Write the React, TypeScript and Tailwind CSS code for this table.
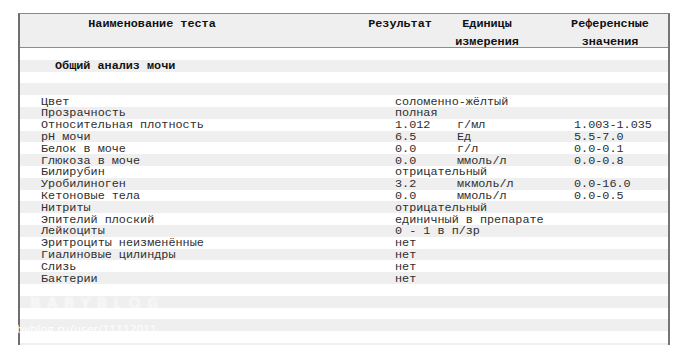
const rows: [string, string, string, string][] = [
  ["Цвет", "соломенно-жёлтый", "", ""],
  ["Прозрачность", "полная", "", ""],
  ["Относительная плотность", "1.012", "г/мл", "1.003-1.035"],
  ["pH мочи", "6.5", "Ед", "5.5-7.0"],
  ["Белок в моче", "0.0", "г/л", "0.0-0.1"],
  ["Глюкоза в моче", "0.0", "ммоль/л", "0.0-0.8"],
  ["Билирубин", "отрицательный", "", ""],
  ["Уробилиноген", "3.2", "мкмоль/л", "0.0-16.0"],
  ["Кетоновые тела", "0.0", "ммоль/л", "0.0-0.5"],
  ["Нитриты", "отрицательный", "", ""],
  ["Эпителий плоский", "единичный в препарате", "", ""],
  ["Лейкоциты", "0 - 1 в п/зр", "", ""],
  ["Эритроциты неизменённые", "нет", "", ""],
  ["Гиалиновые цилиндры", "нет", "", ""],
  ["Слизь", "нет", "", ""],
  ["Бактерии", "нет", "", ""],
];

const Stripe = ({ index, children }: { index: number; children?: React.ReactNode }) => {
  return (
    <div
      className={
        index % 2 === 1
          ? "h-[11.8px] leading-[11.8px] pt-[1.5px] bg-[#efefef]"
          : "h-[11.8px] leading-[11.8px] pt-[1.5px] bg-white"
      }
    >
      {children}
    </div>
  );
};

const Header = () => {
  return (
    <div className="h-[34px] bg-[#efefef] border-b border-[#8c8c8c] flex font-bold text-[#111] leading-[18px] whitespace-nowrap pt-[1px]">
      <div className="w-[264px] text-center">Наименование теста</div>
      <div className="ml-[69px] w-[94px] text-center">Результат</div>
      <div className="w-[80px] text-center">
        Единицы
        <br />
        измерения
      </div>
      <div className="ml-[33px] w-[100px] text-center">
        Референсные
        <br />
        значения
      </div>
    </div>
  );
};

export default function App() {
  const trailing = Array.from({ length: 7 });
  return (
    <div className="relative w-[677px] h-[345px] overflow-hidden bg-white pl-[18px] pt-[13px] font-['Liberation_Mono',monospace] text-[11.8px]">
      <div className="w-[652px] h-[340px] border-t border-t-[#8a8a8a] border-l-2 border-l-[#6e6e6e] border-r-2 border-r-[#757575] overflow-hidden">
        <Header />
        <Stripe index={0} />
        <Stripe index={1}>
          <span className="pl-[35px] font-bold text-[#111]">Общий анализ мочи</span>
        </Stripe>
        <Stripe index={2} />
        <Stripe index={3} />
        {rows.map((r, i) => (
          <Stripe key={r[0]} index={i + 4}>
            <div className="grid grid-cols-[354px_62px_117px_1fr] pl-[21px] text-[#2e2e2e] whitespace-nowrap">
              <span>{r[0]}</span>
              <span>{r[1]}</span>
              <span>{r[2]}</span>
              <span>{r[3]}</span>
            </div>
          </Stripe>
        ))}
        {trailing.map((_, i) => (
          <Stripe key={i} index={i + 20} />
        ))}
      </div>
      <div className="absolute left-[30px] top-[291px] font-['Open_Sans',sans-serif] font-bold text-[16px] tracking-[6px] text-white/60 blur-[1px]">
        BABYBLOG
      </div>
      <div className="absolute left-[3px] top-[320px] font-['Open_Sans',sans-serif] text-[11.5px] tracking-[0.2px] text-white">
        babyblog.ru/user/11112011
      </div>
    </div>
  );
}
